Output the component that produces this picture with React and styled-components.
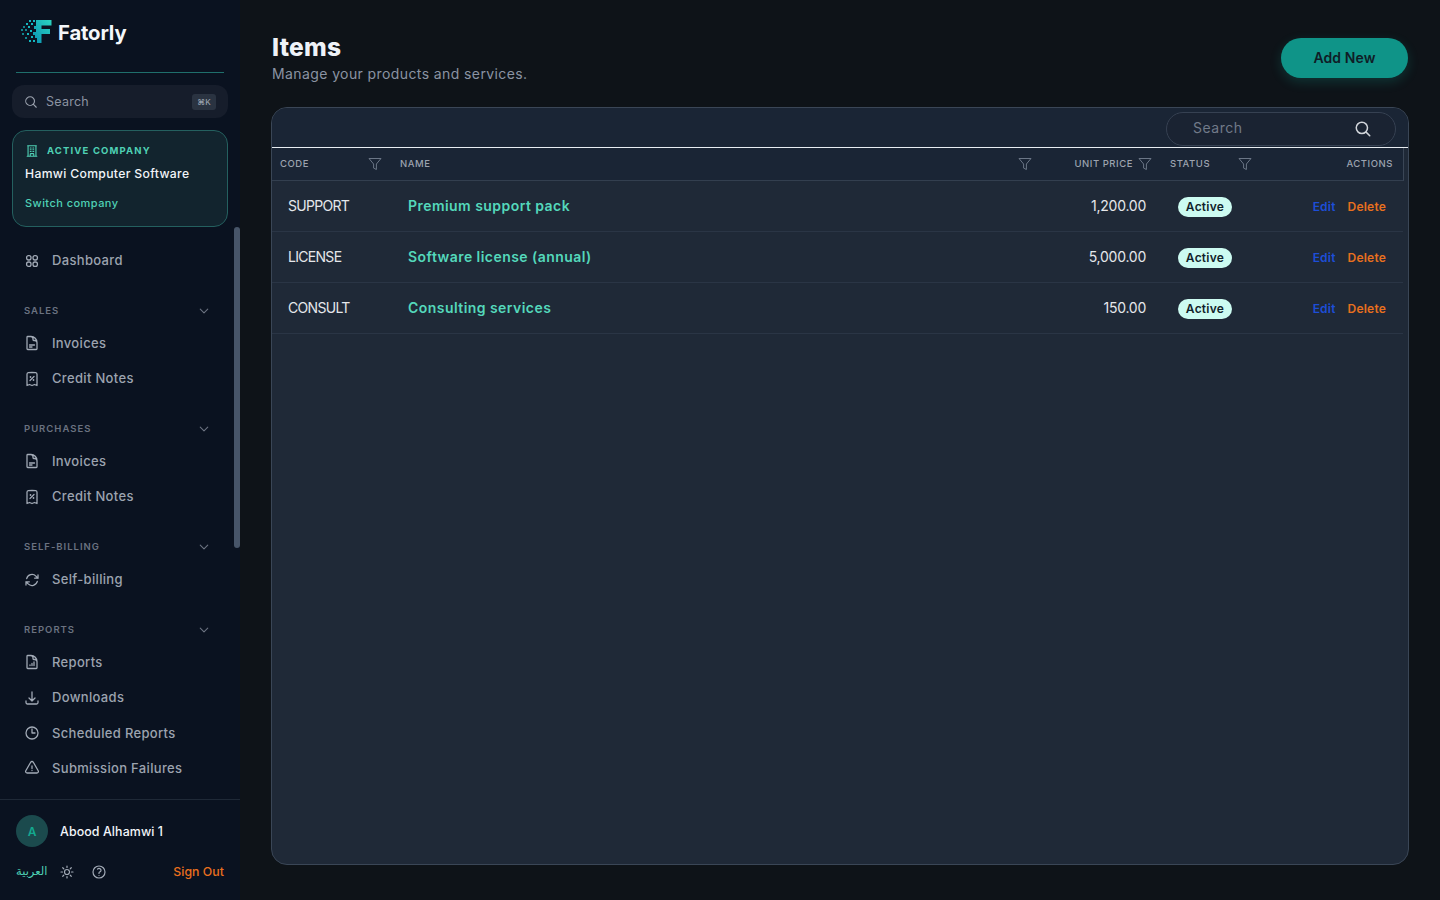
import React from "react";
import styled, { createGlobalStyle } from "styled-components";
import {
  HiOutlineDocumentText, HiOutlineReceiptPercent, HiOutlineArrowPath,
  HiOutlineDocumentChartBar, HiOutlineArrowDownTray, HiOutlineClock, HiOutlineExclamationTriangle,
  HiOutlineBuildingOffice, HiOutlineSun, HiOutlineQuestionMarkCircle, HiOutlineMagnifyingGlass,
  HiOutlineChevronDown,
} from "react-icons/hi2";

const FONT = `Inter, "Noto Sans", sans-serif`;

const Global = createGlobalStyle`
  html, body { margin: 0; height: 100%; background: #0e1318; }
  #root { height: 100%; }
  * { box-sizing: border-box; }
  body { font-family: ${FONT}; overflow: hidden; }
`;

const Shell = styled.div`display: flex; height: 900px; width: 1440px;`;

const Sidebar = styled.aside`
  position: relative;
  width: 240px; flex: none; height: 100%;
  background: #0a1220;
  display: flex; flex-direction: column;
`;
const Brand = styled.div`
  height: 73px; margin: 0 16px; padding: 19px 0 0 4px;
  border-bottom: 1px solid #1f6f6c;
  display: flex; align-items: flex-start; gap: 3px;
`;
const BrandName = styled.span`
  font-size: 20.3px; font-weight: 700; color: #f4f7fa; line-height: 28px; letter-spacing: -0.15px;
  margin-left: 2px;
`;
const SearchBox = styled.div`
  margin: 12px 12px 0; height: 33px; border-radius: 12px;
  background: #161d2b; padding: 0 12px;
  display: flex; align-items: center; gap: 8px; color: #9ca3af;
  svg path { stroke-width: 1.9; }
`;
const SearchLabel = styled.span`flex: 1; font-size: 12.5px; letter-spacing: 0.25px; color: #8b93a1;`;
const Kbd = styled.span`
  height: 16px; width: 24px; border-radius: 3px; background: #2a3341;
  color: #98a1ae; font-size: 8px; font-weight: 500; display: flex; align-items: center; justify-content: center;
`;
const CompanyCard = styled.div`
  margin: 12px 12px 0; height: 97px; border-radius: 14px;
  background: #12242e; border: 1px solid #24605f;
  padding: 12px 12px 0;
`;
const CompanyHead = styled.div`
  display: flex; align-items: center; gap: 8px; color: #4fd1b5; height: 15px;
  svg path { stroke-width: 1.9; }
`;
const CompanyTag = styled.span`font-size: 9.5px; font-weight: 700; letter-spacing: 1.15px; color: #4fd1b5;`;
const CompanyName = styled.div`
  margin-top: 7px; font-size: 12.2px; font-weight: 500; color: #f1f5f9; line-height: 18px; letter-spacing: 0.33px;
`;
const SwitchLink = styled.div`
  margin-top: 12px; font-size: 11px; font-weight: 500; color: #4fd1b5; line-height: 16px; letter-spacing: 0.45px;
`;
const Nav = styled.nav`flex: 1; padding: 16px 12px 0; overflow: hidden;`;
const Thumb = styled.div`
  position: absolute; left: 234px; top: 227px; width: 6px; height: 321px;
  border-radius: 3px; background: #475569;
`;
const NavItem = styled.div`
  height: 35.4px; display: flex; align-items: center; gap: 12px; padding-left: 12px;
  color: #9ca3af; font-size: 13px; font-weight: 500; letter-spacing: 0.33px; padding-bottom: 1px;
  svg { flex: none; color: #a3abb7; margin-top: 1px; }
  svg path { stroke-width: 1.9; }
`;
const Section = styled.div`margin-top: 17.3px;`;
const SectionHead = styled.div`
  height: 30px; display: flex; align-items: center; justify-content: space-between;
  padding: 0 18px 0 12px; color: #6b7280;
  font-size: 9.5px; font-weight: 600; letter-spacing: 1px;
  svg path { stroke-width: 2.2; }
`;
const Footer = styled.footer`
  height: 101px; flex: none; border-top: 1px solid #1f2937; padding: 15px 16px 0;
`;
const UserRow = styled.div`display: flex; align-items: center; gap: 12px;`;
const Avatar = styled.div`
  width: 32px; height: 32px; border-radius: 50%; background: #1b4a4d; color: #14a88f;
  font-size: 12px; font-weight: 600; display: flex; align-items: center; justify-content: center;
`;
const UserName = styled.span`font-size: 12.4px; font-weight: 500; color: #f3f6fa; letter-spacing: 0.1px;`;
const FootRow = styled.div`
  margin-top: 15px; display: flex; align-items: center; color: #a3abb7; height: 18px;
  svg { margin-top: 1px; }
  svg path { stroke-width: 1.8; }
`;
const Lang = styled.span`
  font-family: "DejaVu Sans", sans-serif; font-size: 11.5px; color: #4fd1b5; width: 31px; margin-right: 12px;
`;
const Help = styled.span`margin-left: 16px; display: flex;`;
const SignOut = styled.span`
  margin-left: auto; color: #ea6f1e; font-size: 12.3px; font-weight: 500; letter-spacing: 0.05px;
`;

const Main = styled.main`flex: 1; min-width: 0; padding: 32px 31px 35px 31px; display: flex; flex-direction: column;`;
const TopBar = styled.header`
  height: 46px; margin: 0 0 29px 1px;
  display: flex; justify-content: space-between; align-items: flex-start;
`;
const Title = styled.h1`
  margin: 0; font-size: 24.5px; font-weight: 800; line-height: 30px; color: #eef2f7; letter-spacing: 0.3px;
`;
const Subtitle = styled.p`
  margin: 2px 0 0; font-size: 14px; line-height: 20px; color: #8a93a3; letter-spacing: 0.4px;
`;
const AddButton = styled.button`
  width: 127px; height: 40px; margin-top: 6px; margin-right: 1px; padding: 0 0 2px; border: 0; border-radius: 20px;
  background: #0f9488; color: #0f1c26; font-family: ${FONT};
  font-size: 14px; font-weight: 600; letter-spacing: 0.1px;
  box-shadow: 0 4px 12px rgba(20,184,166,0.2);
`;
const Card = styled.section`
  flex: 1; border-radius: 16px; border: 1px solid #3a4656;
  background: #1f2937; overflow: hidden;
`;
const Toolbar = styled.div`
  height: 40px; background: #1a2535; border-bottom: 1px solid #e8edf2;
  display: flex; justify-content: flex-end; padding: 4px 12px 0 0;
`;
const SearchPill = styled.div`
  width: 230px; height: 34px; border-radius: 17px; border: 1px solid #364152;
  background: #1a2332; padding: 0 23px 4px 26px;
  display: flex; align-items: center; justify-content: space-between; color: #d1d5db;
  svg path { stroke-width: 2; }
  svg { margin-top: 3px; }
`;
const PillText = styled.span`font-size: 14px; color: #717a89; letter-spacing: 0.5px;`;
const Columns = "120px 650px 120px 100px 141px";
const HeadRow = styled.div`
  width: 1132px; display: grid; grid-template-columns: ${Columns}; height: 33px;
  background: #1a2535; border-bottom: 1px solid #333f4f; border-right: 1px solid #3a4656;
`;
const HeadCell = styled.div`
  display: flex; align-items: center; padding: 0 10px 2px 8px; gap: 5px;
  justify-content: ${p => p.$end ? "flex-end" : "space-between"};
  color: #9ca3af; font-size: 9.5px; font-weight: 500; letter-spacing: 0.55px;
  svg { flex: none; margin-top: 2px; }
`;
const Row = styled.div`
  width: 1131px; display: grid; grid-template-columns: ${Columns}; height: 51px;
  border-bottom: 1px solid #2a3545; align-items: center;
`;
const CodeCell = styled.div`padding: 0 0 2px 16px; font-size: 14px; color: #e5e7eb; letter-spacing: -0.7px;`;
const NameCell = styled.div`padding: 0 0 2px 16px; font-size: 14px; font-weight: 600; color: #54d8bb; letter-spacing: 0.45px;`;
const PriceCell = styled.div`padding: 0 16px 2px 0; text-align: right; font-size: 14px; color: #e5e7eb; letter-spacing: -0.25px;`;
const StatusCell = styled.div`padding-left: 16px; display: flex; padding-top: 1px;`;
const Badge = styled.span`
  display: inline-flex; align-items: center; justify-content: center; width: 54px; height: 20px;
  border-radius: 10px; background: #ccfbf1; color: #10222b; font-size: 12px; font-weight: 600; letter-spacing: 0.25px;
`;
const ActionCell = styled.div`
  display: flex; justify-content: flex-end; gap: 12px; padding: 1px 17px 0 0; font-size: 12px; font-weight: 600; letter-spacing: 0.2px;
`;
const EditLink = styled.span`color: #1d4ed8;`;
const DeleteLink = styled.span`color: #e8701e;`;

const Logo = () => (
  <svg width="33" height="25" viewBox="0 0 33 25" style={{ display: "block", flex: "none" }}>
    <defs>
      <linearGradient id="lg" x1="1" x2="0" y1="0" y2="1">
        <stop offset="0" stopColor="#2dd4bf" />
        <stop offset="1" stopColor="#0891b2" />
      </linearGradient>
    </defs>
    <path d="M16 1h15.5v5.5H21.5v3.5H30v5h-8.5v9H17V19h-2v-3h-2v-3h3v-3h-2V7h2z" fill="url(#lg)" />
    {[[9,1],[13,1],[6,4],[11,4],[3,7],[8,7],[1,10],[5,10],[10,11],[2,14],[7,14],[5,18],[11,17],[9,21],[13,21]].map(([x, y], i) => (
      <rect key={i} x={x} y={y} width="2" height="2" fill="#14b8c0" opacity={x < 6 ? 0.7 : 1} />
    ))}
  </svg>
);

const Funnel = () => (
  <svg width="14" height="14" viewBox="0 0 14 14" fill="none" stroke="#6b7686" strokeWidth="1">
    <path d="M1 1.5h12L8.4 7v5.5l-2.8-1.4V7z" strokeLinejoin="round" />
  </svg>
);

const DashIcon = ({ size }) => (
  <svg width={size} height={size} viewBox="0 0 16 16" fill="none" stroke="currentColor" strokeWidth="1.3">
    <rect x="2.6" y="2.6" width="4.4" height="4.4" rx="1.9" />
    <rect x="9" y="2.6" width="4.4" height="4.4" rx="1.9" />
    <rect x="2.6" y="9" width="4.4" height="4.4" rx="1.9" />
    <rect x="9" y="9" width="4.4" height="4.4" rx="1.9" />
  </svg>
);

const Item = ({ icon: Icon, children }) => (
  <NavItem><Icon size={16} />{children}</NavItem>
);

const Group = ({ title, children }) => (
  <Section>
    <SectionHead>{title}<HiOutlineChevronDown size={12} /></SectionHead>
    {children}
  </Section>
);

const items = [
  ["SUPPORT", "Premium support pack", "1,200.00"],
  ["LICENSE", "Software license (annual)", "5,000.00"],
  ["CONSULT", "Consulting services", "150.00"],
];

export default function App() {
  return (
    <Shell>
      <Global />
      <Sidebar>
        <Brand><Logo /><BrandName>Fatorly</BrandName></Brand>
        <SearchBox>
          <HiOutlineMagnifyingGlass size={14} />
          <SearchLabel>Search</SearchLabel>
          <Kbd>⌘K</Kbd>
        </SearchBox>
        <CompanyCard>
          <CompanyHead>
            <HiOutlineBuildingOffice size={14} />
            <CompanyTag>ACTIVE COMPANY</CompanyTag>
          </CompanyHead>
          <CompanyName>Hamwi Computer Software</CompanyName>
          <SwitchLink>Switch company</SwitchLink>
        </CompanyCard>
        <Nav>
          <Item icon={DashIcon}>Dashboard</Item>
          <Group title="SALES">
            <Item icon={HiOutlineDocumentText}>Invoices</Item>
            <Item icon={HiOutlineReceiptPercent}>Credit Notes</Item>
          </Group>
          <Group title="PURCHASES">
            <Item icon={HiOutlineDocumentText}>Invoices</Item>
            <Item icon={HiOutlineReceiptPercent}>Credit Notes</Item>
          </Group>
          <Group title="SELF-BILLING">
            <Item icon={HiOutlineArrowPath}>Self-billing</Item>
          </Group>
          <Group title="REPORTS">
            <Item icon={HiOutlineDocumentChartBar}>Reports</Item>
            <Item icon={HiOutlineArrowDownTray}>Downloads</Item>
            <Item icon={HiOutlineClock}>Scheduled Reports</Item>
            <Item icon={HiOutlineExclamationTriangle}>Submission Failures</Item>
          </Group>
        </Nav>
        <Thumb />
        <Footer>
          <UserRow><Avatar>A</Avatar><UserName>Abood Alhamwi 1</UserName></UserRow>
          <FootRow>
            <Lang>العربية</Lang>
            <HiOutlineSun size={16} />
            <Help><HiOutlineQuestionMarkCircle size={16} /></Help>
            <SignOut>Sign Out</SignOut>
          </FootRow>
        </Footer>
      </Sidebar>
      <Main>
        <TopBar>
          <div>
            <Title>Items</Title>
            <Subtitle>Manage your products and services.</Subtitle>
          </div>
          <AddButton>Add New</AddButton>
        </TopBar>
        <Card>
          <Toolbar>
            <SearchPill>
              <PillText>Search</PillText>
              <HiOutlineMagnifyingGlass size={18} />
            </SearchPill>
          </Toolbar>
          <HeadRow>
            <HeadCell>CODE<Funnel /></HeadCell>
            <HeadCell>NAME<Funnel /></HeadCell>
            <HeadCell $end>UNIT PRICE<Funnel /></HeadCell>
            <HeadCell>STATUS<Funnel /></HeadCell>
            <HeadCell $end>ACTIONS</HeadCell>
          </HeadRow>
          {items.map(([code, name, price]) => (
            <Row key={code}>
              <CodeCell>{code}</CodeCell>
              <NameCell>{name}</NameCell>
              <PriceCell>{price}</PriceCell>
              <StatusCell><Badge>Active</Badge></StatusCell>
              <ActionCell><EditLink>Edit</EditLink><DeleteLink>Delete</DeleteLink></ActionCell>
            </Row>
          ))}
        </Card>
      </Main>
    </Shell>
  );
}
